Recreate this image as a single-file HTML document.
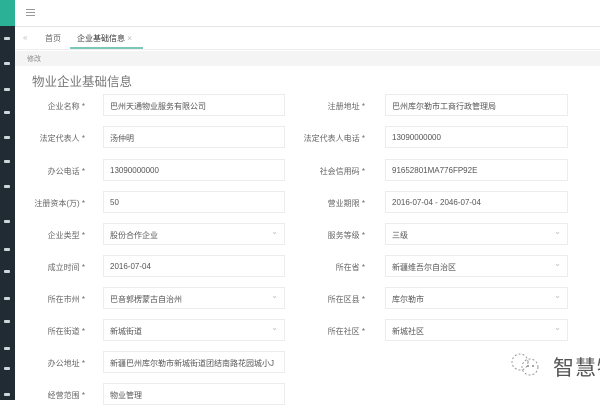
<!DOCTYPE html>
<html><head><meta charset="utf-8"><style>
*{margin:0;padding:0;box-sizing:border-box}
body{width:600px;height:400px;overflow:hidden;background:#fff;font-family:"Liberation Sans","Noto Sans CJK SC",sans-serif;position:relative;color:#555}
.side{position:absolute;left:0;top:0;width:15px;height:400px;background:#202b33}
.side .top{height:26px;background:#2bb196}
.ic{position:absolute;left:4px;width:6px;height:3px;background:#cfd6da;border-radius:1px}
.hdr{position:absolute;left:15px;top:0;right:0;height:27px;border-bottom:1px solid #e6e6e6}
.ham{position:absolute;left:11px;top:9px;width:9px}
.ham i{display:block;height:1px;background:#999;margin-bottom:2px}
.tabs{position:absolute;left:15px;top:28px;right:0;height:22px;border-bottom:1px solid #eee;font-size:8px;color:#666}
.tab{position:absolute;top:5px}
.act{position:absolute;left:55px;top:19px;width:73px;height:2px;background:#7cc7b8}
.band{position:absolute;left:15px;top:51px;right:0;height:15px;background:#f4f4f4;font-size:7px;color:#888;padding:3px 12px}
.title{position:absolute;left:32px;top:71px;font-size:12.5px;color:#777}
.lab{position:absolute;font-size:8px;color:#666;text-align:right;width:80px}
.inp{position:absolute;height:22px;border:1px solid #ececec;font-size:8px;color:#555;padding:6px 6px;white-space:nowrap}
.sel::after{content:"⌄";position:absolute;right:6px;top:3px;color:#bbb;font-size:8px}
.wm{position:absolute;left:553px;top:352px;font-size:21px;color:#555;letter-spacing:1px;white-space:nowrap}
</style></head><body>
<div class="side"><div class="top"></div>
<div class="ic" style="top:37px"></div><div class="ic" style="top:62px"></div><div class="ic" style="top:88px"></div><div class="ic" style="top:111px"></div><div class="ic" style="top:136px"></div><div class="ic" style="top:160px"></div><div class="ic" style="top:185px"></div><div class="ic" style="top:220px"></div><div class="ic" style="top:248px"></div><div class="ic" style="top:270px"></div><div class="ic" style="top:297px"></div><div class="ic" style="top:320px"></div><div class="ic" style="top:347px"></div><div class="ic" style="top:367px"></div><div class="ic" style="top:393px"></div>
</div>
<div class="hdr"><div class="ham"><i></i><i></i><i></i></div></div>
<div class="tabs"><span class="tab" style="left:8px;color:#bbb">«</span><span class="tab" style="left:30px">首页</span><span class="tab" style="left:62px;color:#333">企业基础信息 <span style="color:#bbb">×</span></span><div class="act"></div></div>
<div class="band">修改</div>
<div class="title">物业企业基础信息</div>

<div class="lab" style="left:5px;top:101px">企业名称 *</div><div class="inp" style="left:103px;top:94px;width:182px">巴州天通物业服务有限公司</div>
<div class="lab" style="left:285px;top:101px">注册地址 *</div><div class="inp" style="left:385px;top:94px;width:183px">巴州库尔勒市工商行政管理局</div>

<div class="lab" style="left:5px;top:133px">法定代表人 *</div><div class="inp" style="left:103px;top:126px;width:182px">汤仲明</div>
<div class="lab" style="left:285px;top:133px">法定代表人电话 *</div><div class="inp" style="left:385px;top:126px;width:183px">13090000000</div>

<div class="lab" style="left:5px;top:166px">办公电话 *</div><div class="inp" style="left:103px;top:159px;width:182px">13090000000</div>
<div class="lab" style="left:285px;top:166px">社会信用码 *</div><div class="inp" style="left:385px;top:159px;width:183px">91652801MA776FP92E</div>

<div class="lab" style="left:5px;top:198px">注册资本(万) *</div><div class="inp" style="left:103px;top:191px;width:182px">50</div>
<div class="lab" style="left:285px;top:198px">营业期限 *</div><div class="inp" style="left:385px;top:191px;width:183px">2016-07-04 - 2046-07-04</div>

<div class="lab" style="left:5px;top:230px">企业类型 *</div><div class="inp sel" style="left:103px;top:223px;width:182px">股份合作企业</div>
<div class="lab" style="left:285px;top:230px">服务等级 *</div><div class="inp sel" style="left:385px;top:223px;width:183px">三级</div>

<div class="lab" style="left:5px;top:262px">成立时间 *</div><div class="inp" style="left:103px;top:255px;width:182px">2016-07-04</div>
<div class="lab" style="left:285px;top:262px">所在省 *</div><div class="inp sel" style="left:385px;top:255px;width:183px">新疆维吾尔自治区</div>

<div class="lab" style="left:5px;top:294px">所在市州 *</div><div class="inp sel" style="left:103px;top:287px;width:182px">巴音郭楞蒙古自治州</div>
<div class="lab" style="left:285px;top:294px">所在区县 *</div><div class="inp sel" style="left:385px;top:287px;width:183px">库尔勒市</div>

<div class="lab" style="left:5px;top:326px">所在街道 *</div><div class="inp sel" style="left:103px;top:319px;width:182px">新城街道</div>
<div class="lab" style="left:285px;top:326px">所在社区 *</div><div class="inp sel" style="left:385px;top:319px;width:183px">新城社区</div>

<div class="lab" style="left:5px;top:358px">办公地址 *</div><div class="inp" style="left:103px;top:351px;width:182px;overflow:hidden">新疆巴州库尔勒市新城街道团结南路花园城小J</div>

<div class="lab" style="left:5px;top:390px">经营范围 *</div><div class="inp" style="left:103px;top:383px;width:182px">物业管理</div>

<svg style="position:absolute;left:508px;top:351px" width="34" height="28"><circle cx="12" cy="11" r="8" fill="none" stroke="#999" stroke-width="1" stroke-dasharray="2 2"/><circle cx="22" cy="16" r="8" fill="none" stroke="#999" stroke-width="1" stroke-dasharray="2 2"/><circle cx="20" cy="15" r="1" fill="#888"/><circle cx="25" cy="15" r="1" fill="#888"/></svg>
<div class="wm">智慧物</div>
</body></html>
